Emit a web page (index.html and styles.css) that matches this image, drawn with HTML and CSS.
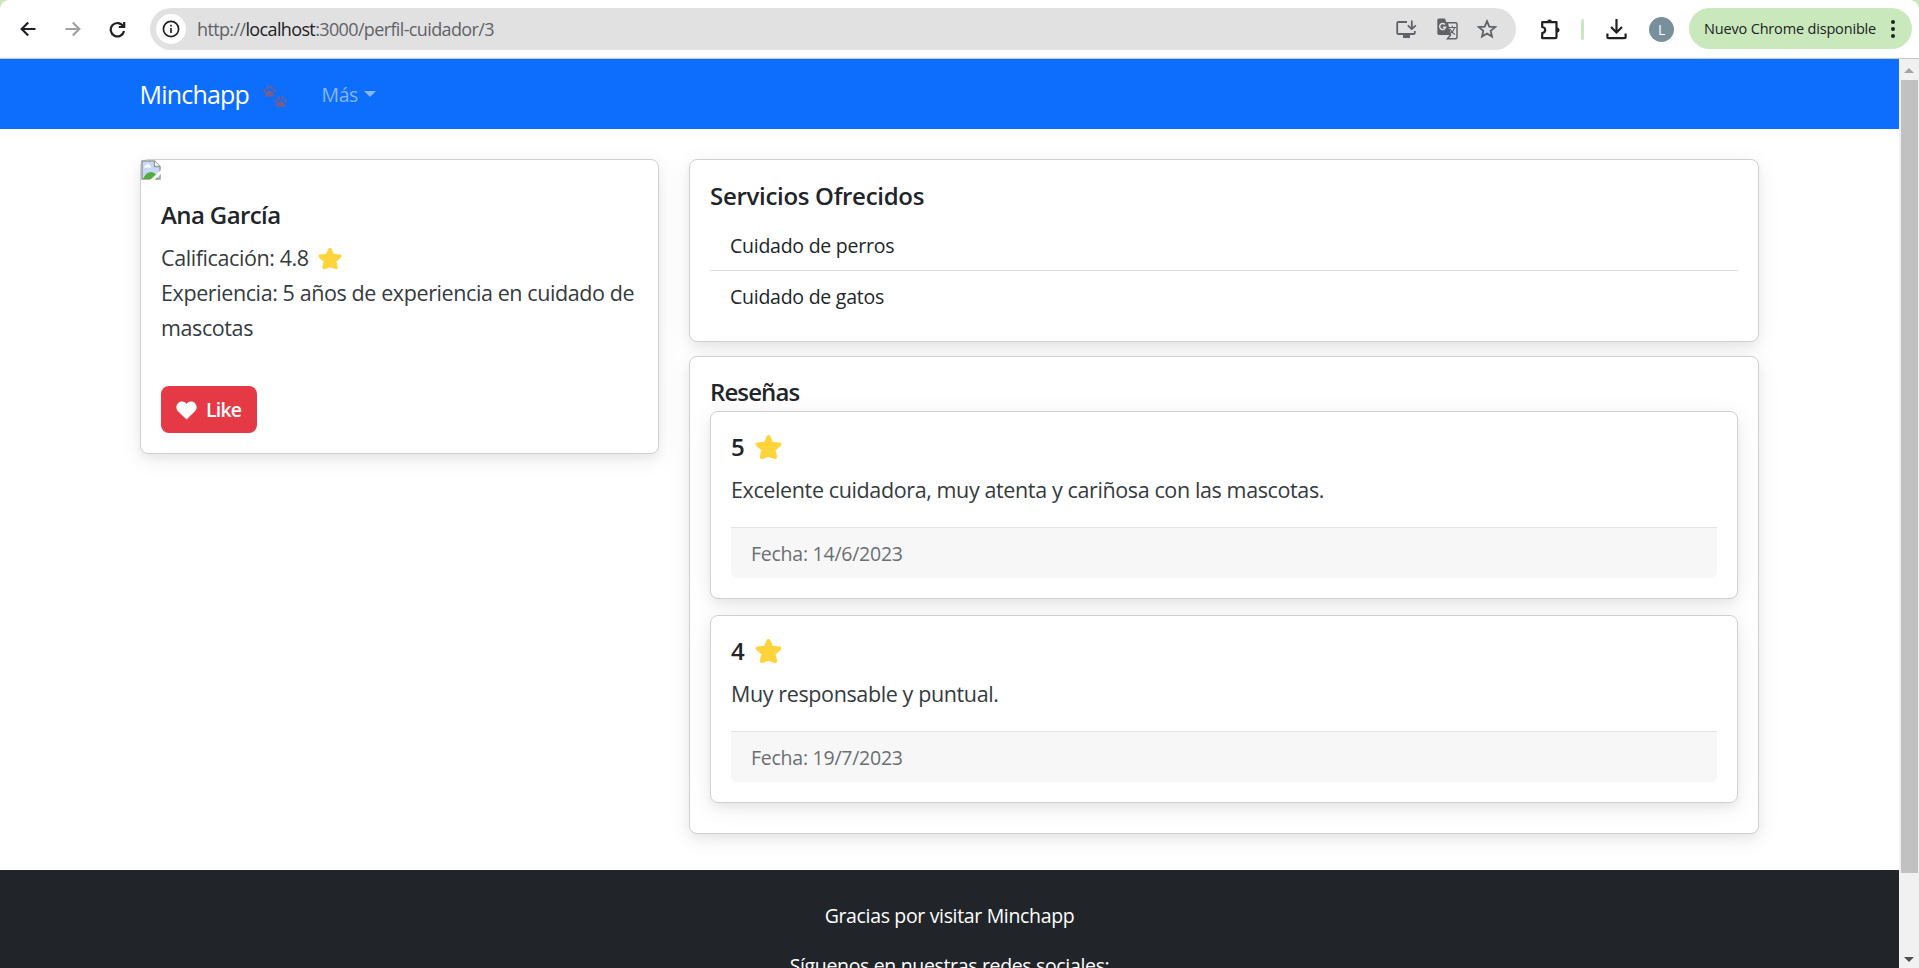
FILE: index.html
```html
<!DOCTYPE html>
<html lang="es">
<head>
<meta charset="utf-8">
<title>Minchapp</title>
<link rel="stylesheet" href="styles.css">
</head>
<body>
<header class="toolbar">
  <div class="corner corner-left"></div><div class="corner corner-right"></div>
  <div class="nav-icons">
    <svg width="16" height="16" viewBox="0 0 16 16" class="ln"><path d="M15.500 8H2M8.200 1.500 1.700 8l6.500 6.500"/></svg>
    <svg width="16" height="16" viewBox="0 0 16 16" class="ln dim"><path d="M.5 8H14M7.800 1.500 14.300 8l-6.500 6.500"/></svg>
    <svg width="17" height="17" viewBox="0 0 17 17" class="ln"><path d="M14 5A6.700 6.700 0 1 0 15 10M15.200 1v5H9.800"/></svg>
  </div>
  <div class="omnibox">
    <span class="info"><svg width="18" height="18" viewBox="0 0 18 18"><circle cx="9" cy="9" r="7.600" fill="none" stroke="#202124" stroke-width="1.700"/><path d="M9 8v5M9 4.800v1.800" stroke="#202124" stroke-width="1.700"/></svg></span>
    <span class="url">http://<b>localhost</b>:3000/perfil-cuidador/3</span>
    <div class="omni-icons">
      <svg width="21" height="19" viewBox="0 0 21 19" class="grey"><path d="M11 2H2.500Q1.200 2 1.200 3.300v9.400Q1.200 14 2.500 14h15q1.300 0 1.300-1.300V11M15.800.5v8.200M11.800 5.300l4 3.800 4-3.800"/><path d="M7 14h7v4H7z" fill="#5f6368" stroke="none"/></svg>
      <svg width="21" height="22" viewBox="0 0 21 22"><path d="M2 .5h6L13.800 17H2Q.3 17 .3 15.300V2.200Q.3.5 2 .5z" fill="#5f6368"/><path d="M10 4.800h8.500q1.500 0 1.500 1.500v13q0 1.500-1.500 1.500H10.500L13.500 17z" fill="none" stroke="#5f6368" stroke-width="1.500"/><path d="M12 9.500h7M15.300 7.700v1.800M17.600 9.600q-1 4-4.300 6M13 11q2 4 5 5.500" fill="none" stroke="#5f6368" stroke-width="1.200"/><path d="M8 6.600A3 3 0 1 0 8.600 9.200H6" fill="none" stroke="#e1e1e1" stroke-width="1.500"/></svg>
      <svg width="20" height="20" viewBox="0 0 20 20" class="grey"><path d="m10 2.200 2.300 5.400 5.800.5-4.400 3.800 1.300 5.700-5-3-5 3 1.300-5.700-4.400-3.800 5.800-.5z"/></svg>
    </div>
  </div>
  <div class="ext-icons">
    <svg width="21" height="21" viewBox="0 0 21 21" class="ln"><path d="M2.200 3.200h14.300v14.600q0 1.400-1.400 1.400H2.200V14q3-.4 3-3t-3-3z" stroke-linejoin="round"/><path d="M7 3a2.500 2.500 0 0 1 5 0zM17 8.500a2.500 2.500 0 0 1 0 5z" fill="#202124" stroke="none"/></svg>
    <i class="divider"></i>
    <svg width="21" height="21" viewBox="0 0 21 21" class="ln"><path d="M10.500 0v13M5 8l5.500 5.500L16 8M1.400 14.500v3.300q0 1.400 1.400 1.400h15.400q1.400 0 1.400-1.400v-3.300"/></svg>
    <span class="avatar">L</span>
  </div>
  <div class="update"><span>Nuevo Chrome disponible</span><svg width="4" height="18" viewBox="0 0 4 18" fill="#202124"><circle cx="2" cy="2" r="2"/><circle cx="2" cy="9" r="2"/><circle cx="2" cy="16" r="2"/></svg></div>
</header>
<div class="viewport">
  <div class="page">
    <nav class="navbar">
      <span class="brand">Minchapp</span>
      <svg class="paws" width="25" height="23" viewBox="0 0 25 23" fill="#6f5f93"><g id="paw"><path d="M6.500 5.500c2.200 0 4.700 2.400 4.700 4.300 0 2.300-2.600 2-4.700 2s-4.700.3-4.700-2c0-1.900 2.500-4.300 4.700-4.300z"/><ellipse cx="1.600" cy="5.600" rx="1.400" ry="1.800"/><ellipse cx="4.700" cy="2.400" rx="1.400" ry="1.900"/><ellipse cx="8.600" cy="2.400" rx="1.400" ry="1.900"/><ellipse cx="11.700" cy="5.600" rx="1.400" ry="1.800"/></g><use href="#paw" x="11" y="10.500"/></svg>
      <span class="more">Más</span><i class="caret"></i>
    </nav>
    <main class="columns">
      <section class="card profile">
        <svg class="broken" width="20" height="20" viewBox="0 0 20 20"><path d="M1 1h12.500L19 6.500V19H1z" fill="#c6d8f8" stroke="#999" stroke-width="1.500"/><path d="M2 19q3-7 8-7t7 7z" fill="#55ab3b"/><path d="M3 7.500q0-2 2-2 .5-2 2.300-1.500Q9 4.500 9 6q1.300 0 1.300 1.500z" fill="#fff"/><path d="M13.500 1v5.500H19" fill="#fff" stroke="#999" stroke-width="1.300"/><path d="m9 20 11-10v4l-6.500 6z" fill="#fff"/></svg>
        <div class="profile-body">
          <h5 class="name">Ana García</h5>
          <p class="text">Calificación: 4.8 <svg class="star small" viewBox="0 0 24 23"><path d="M12 2.500 14.600 8.500 21.800 9.200 16.600 13.900 18 20.500 12 18.600 6 20.500 7.400 13.900 2.200 9.200 9.400 8.500z"/></svg><br>Experiencia: 5 años de experiencia en cuidado de<br>mascotas</p>
          <button class="like"><svg width="21" height="19" viewBox="0 0 21 19" fill="#fff"><path d="M10.500 18.500 1.800 10C-.3 7.700 0 4 2.300 2 4.800-.2 8.500.3 10.500 3c2-2.700 5.700-3.200 8.200-1 2.300 2 2.600 5.700.5 8z"/></svg><span>Like</span></button>
        </div>
      </section>
      <div class="right">
        <section class="card services">
          <h5 class="serv">Servicios Ofrecidos</h5>
          <ul class="list"><li>Cuidado de perros</li><li>Cuidado de gatos</li></ul>
        </section>
        <section class="card reviews">
          <h5 class="res">Reseñas</h5>
          <article class="card review">
            <h5 class="score">5 <svg class="star" viewBox="0 0 24 23"><path d="M12 2.500 14.600 8.500 21.800 9.200 16.600 13.900 18 20.500 12 18.600 6 20.500 7.400 13.900 2.200 9.200 9.400 8.500z"/></svg></h5>
            <p class="comment">Excelente cuidadora, muy atenta y cariñosa con las mascotas.</p>
            <div class="date">Fecha: 14/6/2023</div>
          </article>
          <article class="card review">
            <h5 class="score">4 <svg class="star" viewBox="0 0 24 23"><path d="M12 2.500 14.600 8.500 21.800 9.200 16.600 13.900 18 20.500 12 18.600 6 20.500 7.400 13.900 2.200 9.200 9.400 8.500z"/></svg></h5>
            <p class="comment">Muy responsable y puntual.</p>
            <div class="date">Fecha: 19/7/2023</div>
          </article>
        </section>
      </div>
    </main>
    <footer class="footer"><p>Gracias por visitar Minchapp</p><p>Síguenos en nuestras redes sociales:</p></footer>
  </div>
  <aside class="scrollbar"><i class="up"></i><i class="thumb"></i><i class="down"></i></aside>
</div>
</body>
</html>
```
FILE: styles.css
```css
* { box-sizing: border-box; }
html, body { height: 968px; overflow: hidden; }
body { margin: 0; background: #fff; color: #212529; font: 19.5px/30px "Open Sans", sans-serif; letter-spacing: -.25px; display: flex; flex-direction: column; }
h5, p, ul { margin: 0; padding: 0; }
svg { display: block; flex: none; }
.toolbar { position: relative; flex: none; height: 59px; border-bottom: 1px solid #c8c8c8; display: flex; align-items: flex-start; padding-top: 8px; }
.corner { position: absolute; top: 0; width: 9px; height: 9px; }
.corner-left { left: 0; background: radial-gradient(circle at 100% 100%, #fff 8.5px, #c9e9bd 9px); }
.corner-right { right: 0; background: radial-gradient(circle at 0 100%, #fff 8.5px, #c9e9bd 9px); }
.ln { fill: none; stroke: #202124; stroke-width: 2.2; }
.dim { stroke: #a0a0a0; }
.grey { fill: none; stroke: #5f6368; stroke-width: 1.8; }
.nav-icons { width: 150px; height: 42px; padding-left: 20px; display: flex; align-items: center; gap: 28.5px; }
.omnibox { width: 1366px; height: 42px; border-radius: 21px; background: #e1e1e1; display: flex; align-items: center; padding: 0 19px 0 6px; }
.info { width: 30px; height: 30px; border-radius: 50%; background: #fff; display: grid; place-items: center; }
.url { margin-left: 11px; font-size: 18px; letter-spacing: -.63px; color: #5f6368; white-space: nowrap; }
.url b { font-weight: 400; color: #202124; }
.omni-icons { margin-left: auto; display: flex; align-items: center; gap: 19.5px; }
.ext-icons { width: 173px; height: 42px; padding-left: 24px; display: flex; align-items: center; }
.divider { width: 3px; height: 21px; margin: 0 22px 0 20px; background: #c9e9bd; border-radius: 2px; }
.avatar { width: 25px; height: 25px; margin-left: 22px; border-radius: 50%; background: #78909c; color: #fff; font-size: 14px; line-height: 25px; text-align: center; }
.update { width: 223px; height: 41px; border-radius: 21px; background: #c9e9bd; display: flex; align-items: center; justify-content: space-between; padding: 0 17px 0 15px; font-size: 14.5px; letter-spacing: -.17px; color: #202124; white-space: nowrap; }
.viewport { flex: 1; min-height: 0; display: flex; }
.page { width: 1899px; overflow: hidden; }
.navbar { height: 70px; background: #0d6efd; padding-left: 139.5px; display: flex; align-items: center; }
.brand { font-size: 25px; letter-spacing: -.8px; color: #fff; width: 123px; }
.paws { margin-top: 4px; }
.more { margin: 2px 0 0 34px; color: #86b7fe; letter-spacing: -.4px; }
.caret { margin-left: 6px; border: 6px solid transparent; border-top-color: #86b7fe; border-bottom: 0; }
.columns { padding: 30px 140px 0; display: grid; grid-template-columns: 519px 1070px; gap: 30px; align-items: start; height: 741px; }
.card { background: #fff; border: 1px solid #d0d0d0; border-radius: 8px; box-shadow: 0 5px 10px rgba(0,0,0,.05), 0 5px 25px rgba(0,0,0,.07); }
h5 { font-size: 24px; line-height: 30px; font-weight: 600; white-space: nowrap; }
.profile { height: 295px; }
.profile-body { padding: 20px; }
.name { margin-bottom: 10px; letter-spacing: -.6px; }
.text { font-size: 21.5px; line-height: 35.2px; letter-spacing: -.4px; color: #343a40; white-space: nowrap; }
.star { display: inline-block; width: 27px; height: 26px; vertical-align: -4px; margin-left: 5px; fill: #ffd43b; stroke: #ffd43b; stroke-width: 3.4; stroke-linejoin: round; }
.small { width: 24px; height: 23px; margin-left: 4px; vertical-align: -4px; }
.like { width: 96px; height: 47.5px; margin-top: 40px; border: 0; border-radius: 8px; background: #e63946; color: #fff; font: 600 19.5px/30px "Open Sans", sans-serif; letter-spacing: -.8px; display: flex; align-items: center; padding: 2px 15px 0; gap: 9px; }
.right { display: grid; gap: 14px; }
.services { height: 183px; padding: 20px 20px 0; }
.serv { margin: 1px 0 9px; letter-spacing: -.3px; }
.list { list-style: none; }
.list li { padding: 11px 20px 9px; height: 51px; }
.list li:first-child { border-bottom: 1px solid #dee2e6; }
.reviews { height: 478px; padding: 20px 20px 0; }
.res { margin-bottom: 4px; letter-spacing: -.9px; }
.review { height: 188px; margin-bottom: 16px; padding: 20px 20px 0; }
.score { margin-bottom: 10px; }
.comment { font-size: 21.5px; line-height: 35px; letter-spacing: -.38px; color: #343a40; margin-bottom: 20px; white-space: nowrap; }
.date { height: 51px; border-top: 1px solid #e5e5e5; background: #f7f7f7; color: #6c6f72; padding: 11px 20px 9px; border-radius: 0 0 6px 6px; }
.footer { height: 120px; padding-top: 31px; background: #212529; color: #fff; text-align: center; letter-spacing: -.34px; }
.footer p { margin-bottom: 20px; }
.scrollbar { width: 20px; background: #f1f1f1; display: flex; flex-direction: column; align-items: center; padding: 9px 0 6px; }
.up { border: 5px solid transparent; border-bottom-color: #a3a3a3; border-top: 0; }
.thumb { width: 17px; height: 793px; margin-top: 7px; background: #c1c1c1; }
.down { margin-top: auto; border: 5px solid transparent; border-top-color: #505050; border-bottom: 0; }
```
